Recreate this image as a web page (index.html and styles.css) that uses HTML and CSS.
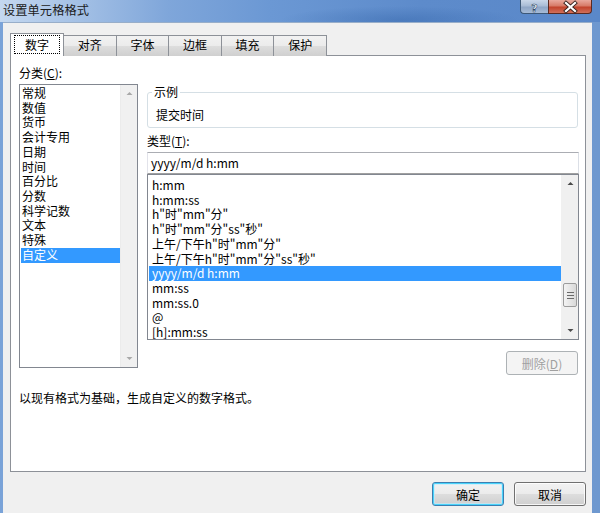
FILE: index.html
```html
<!DOCTYPE html>
<html lang="zh-CN">
<head>
<meta charset="utf-8">
<title>设置单元格格式</title>
<link rel="stylesheet" href="styles.css">
</head>
<body>
<div class="window">
  <div class="titlebar">
    <div class="title">设置单元格格式</div>
    <div class="caption-btns">
      <div class="cbtn help">
        <svg width="27" height="14" viewBox="0 0 27 14"><text x="13.5" y="11.5" text-anchor="middle" class="qmark">?</text></svg>
      </div>
      <div class="cbtn close">
        <svg width="43" height="14" viewBox="0 0 43 14">
          <path d="M17 3 L26 11 M26 3 L17 11" stroke="#3a2420" stroke-width="4" stroke-linecap="square"/>
          <path d="M17 3 L26 11 M26 3 L17 11" stroke="#ffffff" stroke-width="2.2" stroke-linecap="square"/>
        </svg>
      </div>
    </div>
  </div>
  <div class="client">
    <div class="tabs">
      <div class="tab active"><span class="focus">数字</span></div>
      <div class="tab">对齐</div>
      <div class="tab">字体</div>
      <div class="tab">边框</div>
      <div class="tab">填充</div>
      <div class="tab">保护</div>
    </div>
    <div class="panel">
      <div class="main">
        <div class="leftcol">
          <div class="label">分类(<u>C</u>):</div>
          <div class="listbox cat">
            <div class="items">
              <div class="item">常规</div>
              <div class="item">数值</div>
              <div class="item">货币</div>
              <div class="item">会计专用</div>
              <div class="item">日期</div>
              <div class="item">时间</div>
              <div class="item">百分比</div>
              <div class="item">分数</div>
              <div class="item">科学记数</div>
              <div class="item">文本</div>
              <div class="item">特殊</div>
              <div class="item sel">自定义</div>
            </div>
            <div class="vscroll light">
              <svg class="arrow" width="17" height="17" viewBox="0 0 17 17"><path d="M5.5 10 L8.5 7 L11.5 10 Z" fill="#a8a8a8"/></svg>
              <div class="track"></div>
              <svg class="arrow" width="17" height="17" viewBox="0 0 17 17"><path d="M5.5 7 L8.5 10 L11.5 7 Z" fill="#a8a8a8"/></svg>
            </div>
          </div>
        </div>
        <div class="rightcol">
          <fieldset class="sample">
            <legend>示例</legend>
            <div class="sample-text">提交时间</div>
          </fieldset>
          <div class="label type-label">类型(<u>T</u>):</div>
          <div class="input">yyyy/m/d h:mm</div>
          <div class="listbox fmt">
            <div class="items">
              <div class="item">h:mm</div>
              <div class="item">h:mm:ss</div>
              <div class="item">h"时"mm"分"</div>
              <div class="item">h"时"mm"分"ss"秒"</div>
              <div class="item">上午/下午h"时"mm"分"</div>
              <div class="item">上午/下午h"时"mm"分"ss"秒"</div>
              <div class="item sel">yyyy/m/d h:mm</div>
              <div class="item">mm:ss</div>
              <div class="item">mm:ss.0</div>
              <div class="item">@</div>
              <div class="item">[h]:mm:ss</div>
            </div>
            <div class="vscroll">
              <svg class="arrow" width="17" height="17" viewBox="0 0 17 17"><path d="M5.5 10 L8.5 7 L11.5 10 Z" fill="#4a4a4a"/></svg>
              <div class="track">
                <div class="thumb">
                  <svg width="9" height="7" viewBox="0 0 9 7"><path d="M1 0.5 H8 M1 3.5 H8 M1 6.5 H8" stroke="#6a6a6a" stroke-width="1"/></svg>
                </div>
              </div>
              <svg class="arrow" width="17" height="17" viewBox="0 0 17 17"><path d="M5.5 7 L8.5 10 L11.5 7 Z" fill="#4a4a4a"/></svg>
            </div>
          </div>
          <div class="btnrow">
            <div class="btn disabled">删除(<u>D</u>)</div>
          </div>
        </div>
      </div>
      <div class="desc">以现有格式为基础，生成自定义的数字格式。</div>
    </div>
    <div class="footer">
      <div class="btn default">确定</div>
      <div class="btn cancel">取消</div>
    </div>
  </div>
</div>
</body>
</html>
```
FILE: styles.css
```css
* { box-sizing: border-box; }
html, body {
  margin: 0;
  padding: 0;
  width: 600px;
  height: 513px;
  overflow: hidden;
}
body {
  font-family: "Noto Sans CJK SC", "Noto Sans", sans-serif;
  font-size: 12px;
  color: #000;
  background: #6f9ad2;
}
u { text-decoration: underline; text-underline-offset: 1px; }

.window {
  width: 600px;
  height: 513px;
  display: flex;
  flex-direction: column;
  background:
    linear-gradient(90deg, #7aa3d8 0%, #6e98cf 100%);
}

.titlebar {
  height: 22px;
  flex: none;
  display: flex;
  justify-content: space-between;
  align-items: flex-start;
  background:
    radial-gradient(ellipse 120px 14px at 400px 20px, rgba(40,90,160,0.35), rgba(40,90,160,0) 100%),
    linear-gradient(90deg, #c4d8f0 0%, #a6c2e6 12%, #7fa6da 28%, #6b98d4 45%, #5d8bcb 70%, #5a88c9 100%);
}
.title {
  padding-left: 3px;
  padding-top: 1px;
  line-height: 18px;
  color: #1b1b1b;
  font-size: 12.2px;
  letter-spacing: 0.1px;
}
.caption-btns {
  display: flex;
  margin-right: 8px;
}
.cbtn {
  height: 14px;
  border: 1px solid #3d5878;
  border-top: none;
}
.cbtn svg { display: block; }
.help {
  width: 28px;
  border-radius: 0 0 0 4px;
  border-right: none;
  background: linear-gradient(180deg, #c9d7e9 0%, #a9bcd6 45%, #8fa6c6 55%, #a6bbd7 100%);
}
.qmark {
  font-family: "DejaVu Sans", sans-serif;
  font-weight: bold;
  font-size: 11px;
  fill: #fff;
  stroke: #304a6a;
  stroke-width: 0.6px;
}
.close {
  width: 44px;
  border-radius: 0 0 4px 0;
  border-color: #5a2a22;
  background: linear-gradient(180deg, #e9a99d 0%, #d77b68 45%, #c2432c 55%, #d0705a 100%);
}

.client {
  flex: 1;
  margin: 0 8px 0 3px;
  background: #f0f0f0;
  border-top: 1px solid #98aec9;
  padding: 10px 6px 0 7px;
  display: flex;
  flex-direction: column;
}

.tabs {
  display: flex;
  align-items: flex-end;
  height: 23px;
  position: relative;
  z-index: 1;
  margin-bottom: -1px;
}
.tab {
  width: 53.6px;
  height: 21px;
  margin-right: -1px;
  border: 1px solid #8d9198;
  border-bottom: none;
  background: linear-gradient(180deg, #f2f2f2 0%, #ebebeb 50%, #dddddd 52%, #cfcfcf 100%);
  display: flex;
  align-items: center;
  justify-content: center;
  line-height: 16px;
  padding-bottom: 2px;
}
.tab.active {
  width: 54px;
  height: 23px;
  background: #fff;
  position: relative;
  z-index: 2;
  padding-bottom: 2px;
}
.focus {
  display: block;
  width: 46px;
  height: 19px;
  margin-top: 1px;
  border: 1px dotted #000;
  text-align: center;
  line-height: 17px;
}

.panel {
  width: 576px;
  height: 417px;
  background: #fff;
  border: 1px solid #8d9198;
  padding: 9px 6px 0 8px;
  display: flex;
  flex-direction: column;
}
.main {
  display: flex;
  gap: 9px;
}
.label {
  line-height: 16px;
  height: 16px;
}
.leftcol {
  width: 119px;
  display: flex;
  flex-direction: column;
}
.listbox {
  display: flex;
  border: 1px solid #828790;
  background: #fff;
  overflow: hidden;
}
.listbox .items {
  flex: 1;
  min-width: 0;
  overflow: hidden;
}
.item {
  height: 14.73px;
  line-height: 14.73px;
  white-space: nowrap;
}
.item.sel {
  background: #3399ff;
  color: #fff;
}
.cat {
  margin-top: 3px;
  height: 284px;
}
.cat .items { padding: 1px 0 0 1px; }
.cat .item { padding-left: 1px; }

.vscroll {
  width: 17px;
  flex: none;
  display: flex;
  flex-direction: column;
  background: #f0f0f0;
  border-left: 1px solid #ebebeb;
}
.vscroll .arrow { display: block; flex: none; }
.vscroll .track { flex: 1; position: relative; }
.thumb {
  position: absolute;
  left: 1px;
  top: 91px;
  width: 14px;
  height: 24px;
  border: 1px solid #9c9c9c;
  border-radius: 2px;
  background: linear-gradient(90deg, #f3f3f3 0%, #e6e6e6 50%, #d9d9d9 100%);
  display: flex;
  align-items: center;
  justify-content: center;
}
.thumb svg { display: block; }

.rightcol {
  width: 432px;
  display: flex;
  flex-direction: column;
}
.sample {
  margin: 19px 1px 0 0;
  padding: 0 6px 3px 4px;
  border: 1px solid #d5dfe5;
  border-radius: 3px;
  height: 44px;
}
.sample legend {
  padding: 0 2px;
  line-height: 16px;
  font-size: 12px;
}
.sample-text {
  margin-top: 7px;
  padding-left: 4px;
  line-height: 16px;
}
.type-label {
  margin-top: 5px;
}
.input {
  margin-top: 3px;
  height: 22px;
  border: 1px solid #abadb3;
  border-color: #abadb3 #dbdfe6 #a0a0a0 #e2e3ea;
  padding-left: 3px;
  line-height: 20px;
  background: #fff;
}
.fmt {
  height: 166px;
  border-color: #828790;
}
.fmt .items { padding: 3px 0 0 1px; }
.fmt .item { padding-left: 3px; }
.fmt .vscroll { border-left: 1px solid #f0f0f0; }

.btnrow {
  display: flex;
  justify-content: flex-end;
  margin-top: 11px;
  padding-right: 1px;
}
.btn {
  height: 24px;
  border: 1px solid #707070;
  border-radius: 3px;
  display: flex;
  align-items: center;
  justify-content: center;
  background: linear-gradient(180deg, #f2f2f2 0%, #ebebeb 50%, #dddddd 51%, #cfcfcf 100%);
  box-shadow: inset 0 0 0 1px rgba(255,255,255,0.8);
}
.btn.disabled {
  width: 72px;
  color: #a0a0a0;
  border-color: #adb2b5;
  background: #f4f4f4;
  box-shadow: none;
}
.desc {
  margin-top: 15px;
  line-height: 16px;
  padding-left: 0;
}
.footer {
  display: flex;
  justify-content: flex-end;
  gap: 10px;
  margin-top: 10px;
}
.footer .btn {
  width: 72px;
  height: 24px;
}
.btn.default {
  border-color: #3c7fb1;
  box-shadow: inset 0 0 0 1px #48d3fb, inset 0 0 0 2px rgba(190,235,253,0.6);
}
```
